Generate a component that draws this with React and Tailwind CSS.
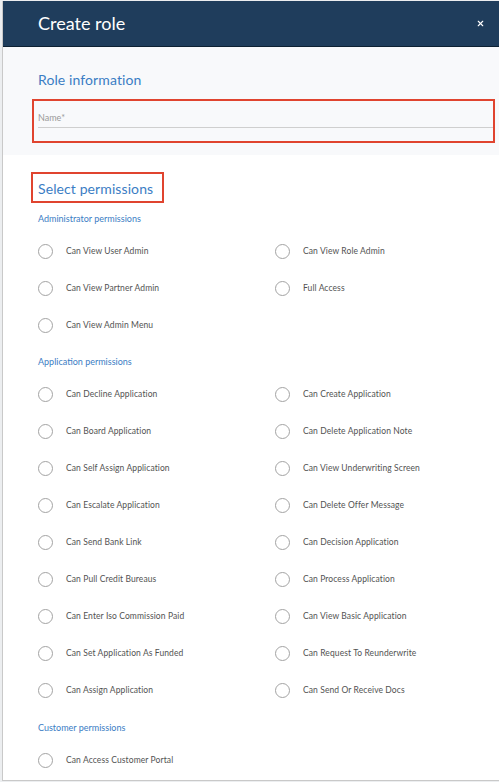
import { X } from "lucide-react";

const adminPerms = [
  ["Can View User Admin", "Can View Role Admin"],
  ["Can View Partner Admin", "Full Access"],
  ["Can View Admin Menu", null],
];

const appPerms = [
  ["Can Decline Application", "Can Create Application"],
  ["Can Board Application", "Can Delete Application Note"],
  ["Can Self Assign Application", "Can View Underwriting Screen"],
  ["Can Escalate Application", "Can Delete Offer Message"],
  ["Can Send Bank Link", "Can Decision Application"],
  ["Can Pull Credit Bureaus", "Can Process Application"],
  ["Can Enter Iso Commission Paid", "Can View Basic Application"],
  ["Can Set Application As Funded", "Can Request To Reunderwrite"],
  ["Can Assign Application", "Can Send Or Receive Docs"],
];

const customerPerms = [["Can Access Customer Portal", null]];

function Radio({ label }) {
  if (!label) return <div />;
  return (
    <label className="flex items-center h-[37px] gap-[13px] cursor-pointer">
      <span className="w-[15px] h-[15px] rounded-full border-[1.5px] border-[#a3a3a3] bg-white shrink-0" />
      <span className="text-[8.5px] text-[#525252] tracking-[0.1px]">{label}</span>
    </label>
  );
}

function PermGroup({ title, rows, className }) {
  return (
    <div className={className}>
      <div className="text-[9px] leading-[12px] text-[#3b7dc4]">{title}</div>
      <div className="mt-[8px] grid grid-cols-[237px_1fr]">
        {rows.map(([a, b], i) => (
          <div key={i} className="contents">
            <Radio label={a} />
            <Radio label={b} />
          </div>
        ))}
      </div>
    </div>
  );
}

export default function App() {
  return (
    <div
      className="w-[499px] h-[782px] overflow-hidden bg-[#eceef0] pt-[1px]"
      style={{ fontFamily: 'Lato, "Open Sans", sans-serif' }}
    >
      <div className="h-[780px] ml-[2px] border-l border-b border-[#c9c9c9] bg-white flex flex-col">
        {/* Header */}
        <div className="h-[46px] bg-[#1f3d5c] border-b border-[#0d2133] flex items-center justify-between pl-[35px] pr-[14px]">
          <h1 className="text-[18px] text-white">Create role</h1>
          <X size={9} strokeWidth={3} className="text-white" />
        </div>

        {/* Role information */}
        <div className="bg-[#f8f9fb] pl-[29px] pr-[4px] pt-[23px] pb-[12px]">
          <h2 className="ml-[6px] text-[14px] leading-[20px] text-[#3b7dc4] tracking-[0.1px]">Role information</h2>
          <div className="mt-[9px] h-[44px] border-2 border-[#e0442f] pl-[4px] pt-[10px]">
            <input
              placeholder="Name*"
              className="block w-full h-[17px] bg-transparent border-b border-[#cfcfcf] text-[9px] leading-[12px] pb-[4px] placeholder:text-[#9a9a9a] outline-none"
            />
          </div>
        </div>

        {/* Permissions */}
        <div className="pl-[35px] pt-[17px]">
          <div className="-ml-[7px] w-[133px] h-[31px] border-2 border-[#e0442f] pl-[5px] pt-[5px]">
            <h2 className="text-[14px] leading-[20px] text-[#3b7dc4] tracking-[0.1px] whitespace-nowrap">Select permissions</h2>
          </div>
          <PermGroup title="Administrator permissions" rows={adminPerms} className="mt-[10px]" />
          <PermGroup title="Application permissions" rows={appPerms} className="mt-[12px]" />
          <PermGroup title="Customer permissions" rows={customerPerms} className="mt-[13px]" />
        </div>
      </div>
    </div>
  );
}
